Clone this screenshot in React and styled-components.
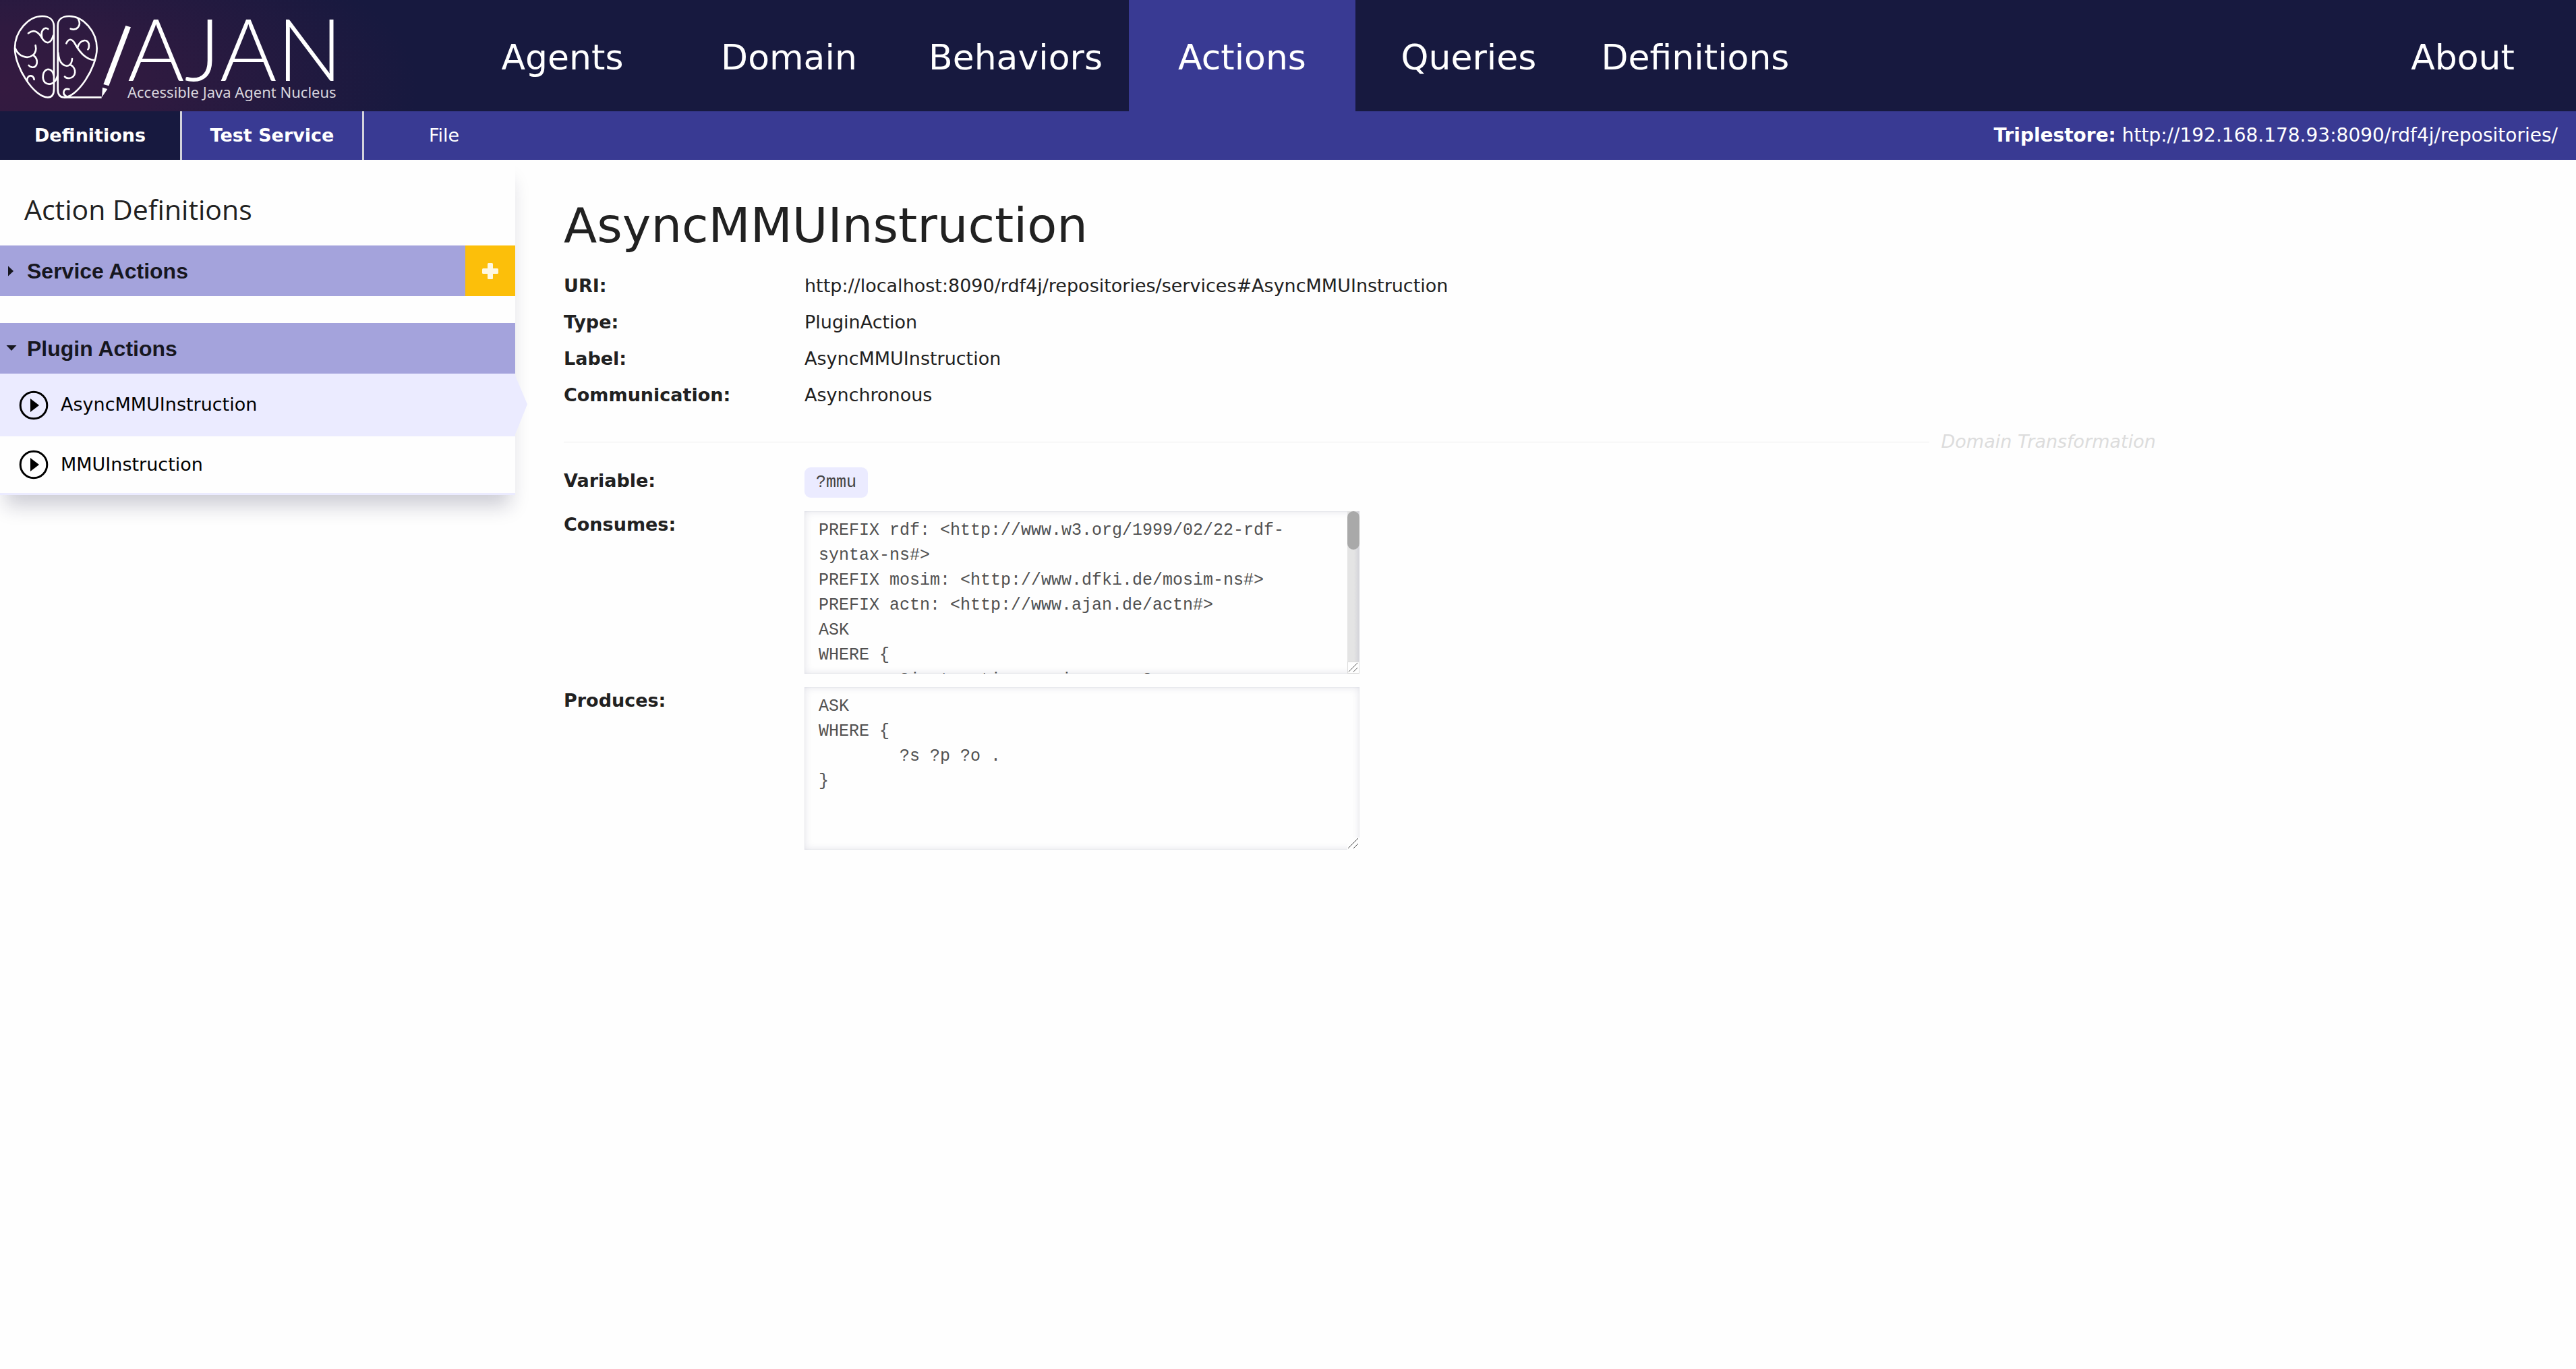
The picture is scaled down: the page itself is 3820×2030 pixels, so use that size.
import React, { useRef, useState, useLayoutEffect } from "react";
import styled, { createGlobalStyle, css } from "styled-components";

const color = {
  night: "#17193f",
  indigo: "#393a93",
  lilac: "#a4a3dc",
  pale: "#ebebff",
  amber: "#fcbf0a",
  ink: "#212121",
  page: "#fefefe",
};

const sans = '"DejaVu Sans", Verdana, sans-serif';
const mono = '"Liberation Mono", "Courier New", monospace';

const GlobalStyle = createGlobalStyle`
  *, *::before, *::after { box-sizing: border-box; }
  body {
    margin: 0;
    background: ${color.page};
    color: ${color.ink};
    font: 27px/1.5 ${sans};
  }
  button, textarea { font: inherit; color: inherit; }
  button { border: 0; padding: 0; background: none; cursor: pointer; }
  a { color: inherit; text-decoration: none; }
`;

const TopBar = styled.header`
  display: flex;
  height: 165px;
  background: ${color.night};
  color: #fff;
`;

const Brand = styled.a`
  display: flex;
  width: 666px;
  background: radial-gradient(ellipse 620px 260px at 0 130px, #341a40 0%, #2f1a40 35%, ${color.night} 100%);
`;

const BrandMark = styled.svg`
  flex: none;
  width: 189px;
  height: 165px;
  overflow: visible;
`;

const BrandText = styled.span`
  display: flex;
  flex-direction: column;
  gap: 3px;
  padding-top: 20px;
`;

const BrandName = styled.span`
  font: 300 129px/100px Lato, sans-serif;
`;

const BrandTagline = styled.span`
  color: #d9d6de;
  font: 22px/26px "Noto Sans", sans-serif;
`;

const MainNav = styled.nav`
  display: flex;
  flex: 1;
`;

const NavLink = styled.a`
  display: flex;
  align-items: center;
  justify-content: center;
  width: 336px;
  padding-top: 4px;
  font-size: 52px;
  background: ${(p) => (p.$active ? color.indigo : "transparent")};
  ${(p) => p.$end && css`margin-left: auto;`}
`;

const SubBar = styled.div`
  display: flex;
  align-items: stretch;
  height: 72px;
  background: ${color.indigo};
  color: #fff;
`;

const SubTab = styled.a`
  display: flex;
  align-items: center;
  justify-content: center;
  width: 270px;
  border-right: 3px solid #d3d3dc;
  font-weight: bold;
  background: ${(p) => (p.$active ? color.night : "transparent")};
`;

const FileButton = styled.button`
  padding: 0 96px;
`;

const StoreInfo = styled.p`
  margin: 0 27px 0 auto;
  align-self: center;
  font-size: 28px;
`;

const Body = styled.div`
  display: flex;
  align-items: flex-start;
`;

const Sidebar = styled.aside`
  width: 20%;
  border-bottom: 3px solid ${color.pale};
  background: ${color.page};
  box-shadow: 0 24px 27px -8px rgba(23, 25, 63, 0.21);
`;

const SidebarTitle = styled.h2`
  margin: 0;
  padding: 43px 36px 24px;
  font: 41px/60px "Open Sans", sans-serif;
`;

const Group = styled.section`
  & + & { margin-top: 40px; }
`;

const GroupHead = styled.div`
  display: flex;
  height: 75px;
  background: ${color.lilac};
`;

const GroupToggle = styled.button`
  display: flex;
  flex: 1;
  align-items: center;
  gap: 12px;
  padding-left: 6px;
  font: bold 32px/40px "Liberation Sans", Arial, sans-serif;
  color: #17171f;
`;

const Caret = styled.svg`
  width: 22px;
  height: 22px;
  transform: rotate(${(p) => (p.$open ? 90 : 0)}deg);
`;

const AddButton = styled.button`
  display: grid;
  place-items: center;
  width: 74px;
  background: ${color.amber};
`;

const ActionList = styled.ul`
  margin: 0;
  padding: 0;
  list-style: none;
`;

const ActionItem = styled.button`
  position: relative;
  display: flex;
  align-items: center;
  gap: 18px;
  width: 100%;
  height: ${(p) => (p.$selected ? 93 : 84)}px;
  padding-left: 28px;
  color: #000;
  background: ${(p) => (p.$selected ? color.pale : "transparent")};
  ${(p) =>
    p.$selected &&
    css`
      &::after {
        content: "";
        position: absolute;
        top: 0;
        left: 100%;
        width: 18px;
        height: 100%;
        background: ${color.pale};
        clip-path: polygon(0 3%, 100% 49%, 0 97%);
      }
    `}
`;

const Main = styled.main`
  width: 64%;
  padding: 43px 0 60px 72px;
`;

const Title = styled.h1`
  margin: 0 0 9px;
  font-size: 72px;
  font-weight: normal;
  line-height: 108px;
`;

const Facts = styled.dl`
  display: grid;
  grid-template-columns: 357px 1fr;
  margin: 0;
  line-height: 54px;
`;

const Term = styled.dt`
  font-weight: bold;
`;

const Value = styled.dd`
  margin: 0;
`;

const Divider = styled.h2`
  display: flex;
  align-items: center;
  gap: 18px;
  margin: 23px 0 19px;
  padding-right: 12px;
  color: #dcdcdc;
  font-size: 27px;
  font-style: italic;
  font-weight: normal;
  line-height: 38px;
  &::before {
    content: "";
    flex: 1;
    height: 1px;
    background: #ececec;
  }
`;

const Form = styled.form`
  display: grid;
  grid-template-columns: 357px 1fr;
  gap: 20px 0;
  align-items: start;
  justify-items: start;
`;

const FieldLabel = styled.label`
  font-weight: bold;
  line-height: 40px;
`;

const Chip = styled.output`
  padding: 0 17px;
  border-radius: 9px;
  background: ${color.pale};
  color: #444;
  font: 25px/45px ${mono};
`;

const CodeBox = styled.div`
  position: relative;
`;

const Code = styled.textarea`
  display: block;
  width: 823px;
  height: 241px;
  padding: 10px 21px;
  border: 0;
  outline: 0;
  resize: both;
  background: transparent;
  box-shadow: inset 0 0 12px rgba(23, 25, 80, 0.12), inset 0 0 2px rgba(23, 25, 80, 0.14);
  color: #505050;
  font: 25px/37px ${mono};
  tab-size: 8;
  scrollbar-width: none;

  &::-webkit-resizer { background: transparent; }
`;

const Rail = styled.span`
  position: absolute;
  top: 0;
  right: 0;
  bottom: 18px;
  width: 18px;
  background: linear-gradient(to right, #e4e4e4 55%, #d3d3d9);
  pointer-events: none;
`;

const Thumb = styled.span`
  position: absolute;
  left: 0;
  right: 0;
  border-radius: 9px;
  background: #a9a9a9;
`;

const Grip = styled.svg`
  position: absolute;
  right: 0;
  bottom: 0;
  width: 18px;
  height: 18px;
  background: ${color.page};
  border: ${(p) => (p.$framed ? "1px solid #dcdcdc" : "0")};
  pointer-events: none;
`;

const consumesQuery = `PREFIX rdf: <http://www.w3.org/1999/02/22-rdf-syntax-ns#>
PREFIX mosim: <http://www.dfki.de/mosim-ns#>
PREFIX actn: <http://www.ajan.de/actn#>
ASK
WHERE {
	?instruction mosim:name ?name .
	?instruction mosim:id ?id .
	?instruction mosim:type ?type .
	?instruction mosim:avatar ?avatar .
	?instruction mosim:host ?host .
	?instruction mosim:port ?port .
	?instruction mosim:start ?start .
	?instruction mosim:end ?end .
	?instruction mosim:target ?target .
	?instruction mosim:state ?state .
	?instruction mosim:scene ?scene .
	?instruction mosim:hand ?hand .
	?instruction mosim:object ?object .
	?instruction mosim:property ?prop .
	?instruction mosim:action ?action .
	?instruction actn:sync ?sync .
	?instruction actn:run ?run .
	?instruction actn:time ?time .
}`;

const producesQuery = "ASK\nWHERE {\n\t?s ?p ?o .\n}";

function BrainPencil() {
  return (
    <BrandMark viewBox="0 0 567 495" fill="none" stroke="#fff" strokeWidth="8" strokeLinecap="round" aria-hidden="true">
      <path d="M240 115C238 86 217 72 188 72C126 72 66 140 66 215C66 300 152 433 213 433C233 433 240 420 240 395Z" />
      <path d="M257 115C257 86 277 72 308 72C370 72 431 140 431 215C431 300 345 433 285 433C265 433 257 420 257 395Z" />
      <path d="M126 148C148 130 166 139 181 160C193 182 203 191 215 189C226 186 233 172 237 158" />
      <path d="M214 129C200 117 178 135 187 168" />
      <path d="M68 215C82 250 120 265 145 246C160 235 162 218 158 202" />
      <path d="M150 247C172 264 168 302 143 299C136 298 131 295 128 291" />
      <path d="M239 335C236 315 222 306 210 309C190 315 185 350 200 367C214 380 238 374 249 355L257 335" />
      <path d="M121 360C118 333 148 328 152 354" />
      <path d="M348 84C364 115 342 138 314 128" />
      <path d="M295 193C305 170 320 172 332 192C352 228 378 264 422 268" />
      <path d="M345 212C355 172 397 170 396 204C396 212 394 217 391 220" />
      <path d="M259 235C262 285 290 300 308 290C318 284 320 275 321 261" />
      <path d="M314 289C342 302 340 345 308 348C298 348 291 345 288 341" />
      <path d="M307 397C284 390 274 416 294 428" />
      <path d="M285 433H452" strokeLinecap="butt" />
      <path d="M559 114L582 121L484 382L460 375Z" fill="#fff" stroke="none" />
      <path d="M456 389L478 396L453 433Z" fill="#fff" stroke="none" />
    </BrandMark>
  );
}

function PlayIcon() {
  return (
    <svg width="44" height="44" viewBox="0 0 44 44" aria-hidden="true">
      <circle cx="22" cy="22" r="19.8" fill="none" stroke="#000" strokeWidth="3" />
      <path d="M17 12L30 22L17 32Z" />
    </svg>
  );
}

function PlusIcon() {
  return (
    <svg width="26" height="26" viewBox="0 0 26 26" fill="#fff8e0" aria-hidden="true">
      <rect x="9" y="1" width="8" height="24" rx="1.5" />
      <rect x="1" y="9" width="24" height="8" rx="1.5" />
    </svg>
  );
}

function ActionGroup({ title, items = [], startOpen, canAdd, selected, onSelect }) {
  const [open, setOpen] = useState(startOpen);
  return (
    <Group>
      <GroupHead>
        <GroupToggle type="button" aria-expanded={open} onClick={() => setOpen(!open)}>
          <Caret $open={open} viewBox="0 0 22 22" aria-hidden="true">
            <path d="M6 3.500L14 11L6 18.500Z" fill="#17171f" />
          </Caret>
          {title}
        </GroupToggle>
        {canAdd && (
          <AddButton type="button" aria-label="Add action">
            <PlusIcon />
          </AddButton>
        )}
      </GroupHead>
      {open && (
        <ActionList>
          {items.map((name) => (
            <li key={name}>
              <ActionItem type="button" $selected={name === selected} onClick={() => onSelect(name)}>
                <PlayIcon />
                {name}
              </ActionItem>
            </li>
          ))}
        </ActionList>
      )}
    </Group>
  );
}

function CodeArea({ id, value }) {
  const area = useRef(null);
  const [thumb, setThumb] = useState(null);

  const measure = () => {
    const { scrollTop, scrollHeight, clientHeight } = area.current;
    setThumb(
      scrollHeight > clientHeight
        ? { top: `${(scrollTop / scrollHeight) * 100}%`, height: `${(clientHeight / scrollHeight) * 100}%` }
        : null
    );
  };

  useLayoutEffect(measure, []);

  return (
    <CodeBox>
      <Code id={id} ref={area} defaultValue={value} spellCheck={false} onScroll={measure} onInput={measure} />
      {thumb && (
        <Rail>
          <Thumb style={thumb} />
        </Rail>
      )}
      <Grip $framed={Boolean(thumb)} viewBox="0 0 18 18" stroke="#444" strokeWidth="1" aria-hidden="true">
        <path d="M1 16L16 1M9 16L16 9" />
      </Grip>
    </CodeBox>
  );
}

const sections = ["Agents", "Domain", "Behaviors", "Actions", "Queries", "Definitions"];

const facts = [
  ["URI:", "http://localhost:8090/rdf4j/repositories/services#AsyncMMUInstruction"],
  ["Type:", "PluginAction"],
  ["Label:", "AsyncMMUInstruction"],
  ["Communication:", "Asynchronous"],
];

export default function App() {
  const [selected, setSelected] = useState("AsyncMMUInstruction");
  return (
    <>
      <GlobalStyle />
      <TopBar>
        <Brand href="#home">
          <BrainPencil />
          <BrandText>
            <BrandName>AJAN</BrandName>
            <BrandTagline>Accessible Java Agent Nucleus</BrandTagline>
          </BrandText>
        </Brand>
        <MainNav>
          {sections.map((name) => (
            <NavLink key={name} href={`#${name}`} $active={name === "Actions"}>
              {name}
            </NavLink>
          ))}
          <NavLink href="#About" $end>
            About
          </NavLink>
        </MainNav>
      </TopBar>
      <SubBar>
        <SubTab href="#definitions" $active>
          Definitions
        </SubTab>
        <SubTab href="#test">Test Service</SubTab>
        <FileButton type="button">File</FileButton>
        <StoreInfo>
          <b>Triplestore:</b> http://192.168.178.93:8090/rdf4j/repositories/
        </StoreInfo>
      </SubBar>
      <Body>
        <Sidebar>
          <SidebarTitle>Action Definitions</SidebarTitle>
          <ActionGroup title="Service Actions" startOpen={false} canAdd />
          <ActionGroup
            title="Plugin Actions"
            startOpen
            items={["AsyncMMUInstruction", "MMUInstruction"]}
            selected={selected}
            onSelect={setSelected}
          />
        </Sidebar>
        <Main>
          <Title>AsyncMMUInstruction</Title>
          <Facts>
            {facts.map(([term, value]) => (
              <React.Fragment key={term}>
                <Term>{term}</Term>
                <Value>{value}</Value>
              </React.Fragment>
            ))}
          </Facts>
          <Divider>Domain Transformation</Divider>
          <Form>
            <FieldLabel htmlFor="variable">Variable:</FieldLabel>
            <Chip id="variable">?mmu</Chip>
            <FieldLabel htmlFor="consumes">Consumes:</FieldLabel>
            <CodeArea id="consumes" value={consumesQuery} />
            <FieldLabel htmlFor="produces">Produces:</FieldLabel>
            <CodeArea id="produces" value={producesQuery} />
          </Form>
        </Main>
      </Body>
    </>
  );
}
